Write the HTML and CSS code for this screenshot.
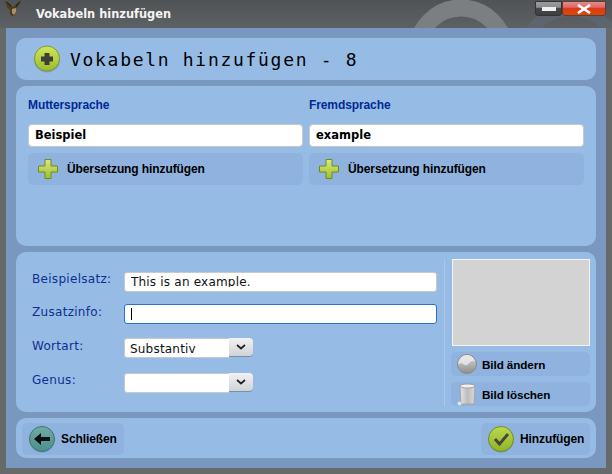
FILE: index.html
```html
<!DOCTYPE html>
<html lang="de">
<head>
<meta charset="utf-8">
<title>Vokabeln hinzufügen</title>
<link rel="stylesheet" href="styles.css">
</head>
<body>
<div class="window">
  <header class="titlebar">
    <svg class="deco" width="220" height="28" viewBox="0 0 220 28"><circle cx="170" cy="58" r="48" fill="none" stroke="#5f6a78" stroke-width="12" opacity=".55"/><circle cx="60" cy="52" r="44" fill="none" stroke="#7b7f82" stroke-width="17"/></svg>
    <svg class="eagle" width="18" height="17" viewBox="0 0 18 17"><path d="M0 1l5 3 3 3 3-3 5-4-2 5-3 4 0 3-1 3-3 1-2-2 0-4-3-3z" fill="#4a3c20"/><path d="M7 9l4-1 0 4-2 3-2-2z" fill="#a89468"/><path d="M2 2l4 4M15 2l-4 4" stroke="#1d1a12" stroke-width="1"/></svg>
    <span class="title-text">Vokabeln hinzufügen</span>
    <div class="win-buttons">
      <span class="win-btn win-min"><i class="min-glyph"></i></span>
      <span class="win-btn win-close"><svg width="16" height="10" viewBox="0 0 16 10"><path d="M2 1l12 8M14 1L2 9" stroke="#fff" stroke-width="2.6"/></svg></span>
    </div>
  </header>
  <main class="content">
    <section class="panel panel-head">
      <svg class="icon-head" width="28" height="28" viewBox="0 0 28 28"><defs><linearGradient id="g1" x1="0" y1="0" x2="0" y2="1"><stop offset="0" stop-color="#d3e45e"/><stop offset="1" stop-color="#98bd2a"/></linearGradient></defs><ellipse cx="14" cy="15" rx="13" ry="12.5" fill="#6f8aa8" opacity=".6"/><circle cx="14" cy="13.5" r="12.5" fill="url(#g1)" stroke="#7f9c26"/><path d="M11.5 8h5v3.500h3.500v5h-3.500v3.500h-5v-3.500H8v-5h3.500z" fill="#3c3f36"/></svg>
      <h1 class="head-text">Vokabeln hinzufügen - 8</h1>
    </section>
    <section class="panel panel-lang">
      <div class="lang-col">
        <div class="lang-label">Muttersprache</div>
        <div class="lang-input">Beispiel</div>
        <div class="btn btn-add"><svg width="20" height="20" viewBox="0 0 20 20"><defs><linearGradient id="g2" x1="0" y1="0" x2="0" y2="1"><stop offset="0" stop-color="#dcea78"/><stop offset="1" stop-color="#9dbf2e"/></linearGradient></defs><path d="M7 .5h6v6.500h6.500v6H13v6.500H7V13H.5V7H7z" fill="url(#g2)" stroke="#6f8a22"/></svg><span>Übersetzung hinzufügen</span></div>
      </div>
      <div class="lang-col">
        <div class="lang-label">Fremdsprache</div>
        <div class="lang-input">example</div>
        <div class="btn btn-add"><svg width="20" height="20" viewBox="0 0 20 20"><path d="M7 .5h6v6.500h6.500v6H13v6.500H7V13H.5V7H7z" fill="url(#g2)" stroke="#6f8a22"/></svg><span>Übersetzung hinzufügen</span></div>
      </div>
    </section>
    <section class="panel panel-detail">
      <div class="form">
        <label class="f-label">Beispielsatz:</label>
        <div class="f-input"><span class="f-clip">This is an example.</span></div>
        <label class="f-label f-label-low">Zusatzinfo:</label>
        <div class="f-input f-focus"><i class="caret"></i></div>
        <label class="f-label f-label-low">Wortart:</label>
        <div class="f-select"><div class="f-select-val"><span class="f-select-clip">Substantiv</span></div><span class="f-arrow"><svg width="10" height="6" viewBox="0 0 10 6"><path d="M1 1l4 3.500L9 1" fill="none" stroke="#222" stroke-width="1.700"/></svg></span></div>
        <label class="f-label">Genus:</label>
        <div class="f-select"><div class="f-select-val"></div><span class="f-arrow"><svg width="10" height="6" viewBox="0 0 10 6"><path d="M1 1l4 3.500L9 1" fill="none" stroke="#222" stroke-width="1.700"/></svg></span></div>
      </div>
      <div class="side">
        <div class="picture"></div>
        <div class="btn btn-side"><svg width="20" height="20" viewBox="0 0 20 20"><defs><linearGradient id="g3" x1="0" y1="0" x2="0" y2="1"><stop offset="0" stop-color="#dcdcdc"/><stop offset="1" stop-color="#8e8e8e"/></linearGradient></defs><circle cx="10" cy="10" r="9.500" fill="url(#g3)" stroke="#8a8a8a"/><path d="M1 11c4-5 6 2 9 0s4-6 8-3c-1-4-4-7-8-7-5 0-9 5-9 10z" fill="#efefef" opacity=".75"/></svg><span>Bild ändern</span></div>
        <div class="btn btn-side"><svg width="20" height="23" viewBox="0 0 20 23"><defs><linearGradient id="g4" x1="0" y1="0" x2="1" y2="0"><stop offset="0" stop-color="#e6e6e6"/><stop offset=".5" stop-color="#bdbdbd"/><stop offset="1" stop-color="#dadada"/></linearGradient></defs><path d="M3 3h15l-1 18H4z" fill="url(#g4)" stroke="#a5a5a5"/><ellipse cx="10.500" cy="3" rx="7.500" ry="2" fill="#f2f2f2" stroke="#a0a0a0"/><circle cx="2.500" cy="20.500" r="2" fill="#e2e2e2"/></svg><span>Bild löschen</span></div>
      </div>
    </section>
    <section class="panel panel-foot">
      <div class="btn btn-foot btn-close"><svg width="26" height="27" viewBox="0 0 26 27"><defs><linearGradient id="g5" x1="0" y1="0" x2="0" y2="1"><stop offset="0" stop-color="#72aaa6"/><stop offset="1" stop-color="#4b8f8c"/></linearGradient></defs><ellipse cx="13" cy="14.500" rx="12.500" ry="12" fill="#6f8aa8" opacity=".6"/><circle cx="13" cy="13" r="12.500" fill="url(#g5)" stroke="#3f7473"/><path d="M12 7L5 13l7 6v-4h9v-4h-9z" fill="#0c0f0f"/></svg><span>Schließen</span></div>
      <div class="btn btn-foot btn-ok"><svg width="26" height="27" viewBox="0 0 26 27"><defs><linearGradient id="g6" x1="0" y1="0" x2="0" y2="1"><stop offset="0" stop-color="#bcd84e"/><stop offset="1" stop-color="#8fb427"/></linearGradient></defs><ellipse cx="13" cy="14.500" rx="12.500" ry="12" fill="#6f8aa8" opacity=".6"/><circle cx="13" cy="13" r="12.500" fill="url(#g6)" stroke="#6f8f1f"/><path d="M7 13l4.500 5L20 8" fill="none" stroke="#44483a" stroke-width="2.800"/></svg><span>Hinzufügen</span></div>
    </section>
  </main>
</div>
</body>
</html>
```
FILE: styles.css
```css
* { box-sizing: border-box; }
html, body { margin: 0; padding: 0; }
body { width: 612px; height: 474px; overflow: hidden; background: #666a6a; font-family: "Liberation Sans", Arial, sans-serif; }
.window { width: 612px; height: 474px; display: flex; flex-direction: column; }
.titlebar { position: relative; height: 28px; flex: none; background: linear-gradient(#505355, #5e6163); overflow: hidden; display: flex; align-items: center; padding-left: 36px; }
.deco { position: absolute; left: 401px; top: 0; }
.eagle { position: absolute; left: 5px; top: 0; }
.title-text { position: relative; font: bold 11.400px "DejaVu Sans", sans-serif; color: #f4f4f4; }
.win-buttons { position: absolute; right: 6px; top: 1px; display: flex; }
.win-btn { width: 27px; height: 15px; display: flex; align-items: center; justify-content: center; border-radius: 0 0 3px 3px; }
.win-min { background: linear-gradient(#9a9c9e 0, #8a8c8e 40%, #46494b 50%, #3c3e40 100%); border: 1px solid #333; }
.win-close { width: 44px; background: linear-gradient(#e88a88 0, #d96a68 40%, #df3a12 50%, #d8480e 100%); border: 1px solid #5a4030; }
.min-glyph { display: block; width: 14px; height: 4px; background: #eef0f2; }
.content { margin: 0 6px; height: 440px; background: #7a97bf; padding: 10px; display: flex; flex-direction: column; gap: 6px; }
.panel { background: #96bce6; border-radius: 10px; flex: none; }
.panel-head { height: 42px; display: flex; align-items: center; padding-left: 17px; }
.icon-head { flex: none; }
.head-text { margin: 0 0 0 9px; font: normal 18px "DejaVu Sans Mono", monospace; letter-spacing: 1.700px; color: #000; }
.panel-lang { height: 160px; padding: 12px 12px 0; display: flex; gap: 6px; }
.lang-col { width: 275px; }
.lang-label { height: 26px; font: bold 12px "Liberation Sans", sans-serif; letter-spacing: -.1px; color: #002a94; line-height: 15px; }
.lang-input { height: 23px; background: #fff; border: 1px solid #c9c9c9; border-radius: 4px; padding-left: 6px; font: bold 11.500px/21px "DejaVu Sans", sans-serif; color: #000; }
.btn { display: flex; align-items: center; background: #8fb3de; border-radius: 5px; font: bold 12px "Liberation Sans", sans-serif; letter-spacing: -.1px; color: #000; }
.btn-add { height: 32px; margin-top: 6px; padding-left: 10px; gap: 9px; }
.panel-detail { height: 160px; padding: 7px 6px 6px 16px; display: flex; }
.form { width: 413px; padding: 13px 8px 0 0; display: grid; grid-template-columns: 92px 313px; grid-template-rows: 32px 34px 35px 20px; align-content: start; border-right: 1px solid #a9c8ea; margin-right: 6px; height: 147px; flex: none; }
.f-label { font: 12px/15px "DejaVu Sans", sans-serif; color: #0e2f8e; letter-spacing: .3px; }
.f-label-low { padding-top: 1px; }
.f-input { height: 20px; background: #fff; border: 1px solid #c9c9c9; border-radius: 3px; padding-left: 6px; font: 12px "DejaVu Sans", sans-serif; letter-spacing: .2px; color: #111; overflow: hidden; }
.f-clip { display: block; height: 14px; line-height: 18px; overflow: hidden; white-space: nowrap; }
.f-focus { border-color: #2a72c8; display: flex; align-items: center; }
.caret { display: block; width: 1px; height: 12px; background: #000; }
.f-select { display: flex; height: 20px; }
.f-select-val { width: 105px; height: 20px; background: #fff; border: 1px solid #c9c9c9; border-right: none; border-radius: 3px 0 0 3px; padding-left: 5px; font: 12px "DejaVu Sans", sans-serif; letter-spacing: .2px; color: #111; overflow: hidden; }
.f-select-clip { display: block; width: 66px; height: 15px; line-height: 20px; overflow: hidden; white-space: nowrap; }
.f-arrow { width: 24px; height: 19px; background: linear-gradient(#f2f2f2, #cfd3d8); border-radius: 0 4px 4px 0; border-bottom: 1px solid #7d8fa6; display: flex; align-items: center; justify-content: center; }
.side { width: 139px; flex: none; display: flex; flex-direction: column; }
.picture { width: 138px; height: 87px; margin-left: 1px; background: #d3d3d3; border: 1px solid #f4f4f4; flex: none; }
.btn-side { height: 24px; margin-top: 6px; padding-left: 6px; gap: 5px; font-size: 11.700px; }
.panel-foot { height: 40px; padding: 5px 6px 3px; display: flex; justify-content: space-between; }
.btn-foot { height: 32px; }
.btn-close { width: 102px; padding-left: 7px; gap: 6px; }
.btn-ok { width: 109px; padding-left: 7px; gap: 6px; }
```
